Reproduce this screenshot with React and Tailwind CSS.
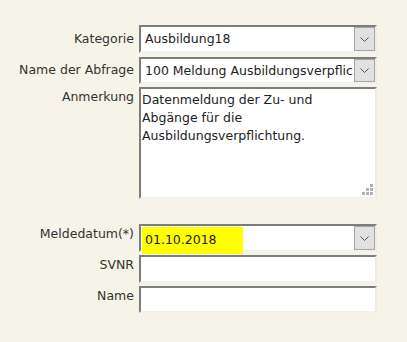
import React from 'react';

const font = { fontFamily: '"DejaVu Sans", Verdana, sans-serif' };

const Chevron = () => (
  <svg width="9" height="5" viewBox="0 0 9 5" className="block">
    <path d="M0.5 0.5 L4.5 4.5 L8.5 0.5" fill="none" stroke="#555" strokeWidth="1" />
  </svg>
);

const Box = ({ className = '', children }) => (
  <div
    className={`relative w-[238px] bg-white border-t-2 border-l-2 border-r-2 border-b-2 border-t-[#7d7d7d] border-l-[#7d7d7d] border-r-[#ececec] border-b-[#f1f1f1] ${className}`}
  >
    {children}
  </div>
);

const DropButton = () => (
  <div className="absolute right-0 top-0 bottom-0 w-[21px] bg-[#e1e1e1] border border-[#a5a5a5] flex items-center justify-center">
    <Chevron />
  </div>
);

const Row = ({ label, labelClass = 'items-center', labelPad = '', className = '', children }) => (
  <div className={`flex ${labelClass} ${className}`}>
    <div className={`w-[134px] text-right text-[12.5px] text-[#333] leading-none shrink-0 ${labelPad}`}>{label}</div>
    <div className="ml-[5px]">{children}</div>
  </div>
);

const App = () => {
  return (
    <div className="w-[407px] h-[342px] bg-[#f6f4e8] pt-[25px]" style={font}>
      <Row label="Kategorie">
        <Box className="h-[28px]">
          <div className="pl-[4px] text-[12.5px] leading-[24px] text-[#222]">Ausbildung18</div>
          <DropButton />
        </Box>
      </Row>
      <Row label="Name der Abfrage" className="mt-[4px]">
        <Box className="h-[27px] overflow-hidden">
          <div className="pl-[4px] text-[12.5px] leading-[23px] text-[#222] whitespace-nowrap">
            100 Meldung Ausbildungsverpflic
          </div>
          <DropButton />
        </Box>
      </Row>
      <Row label="Anmerkung" labelClass="items-start" labelPad="pt-[4px]" className="mt-[3px]">
        <Box className="h-[112px]">
          <div className="pl-[1px] pt-[2px] pr-[8px] text-[12.5px] leading-[18px] text-[#222]">
            Datenmeldung der Zu- und
            <br />
            Abgänge für die
            <br />
            Ausbildungsverpflichtung.
          </div>
          <svg width="11" height="11" viewBox="0 0 11 11" className="absolute right-[2px] bottom-[2px]">
            <g fill="#b3b3b3">
              <rect x="8" y="0" width="3" height="3" />
              <rect x="4" y="4" width="3" height="3" />
              <rect x="8" y="4" width="3" height="3" />
              <rect x="0" y="8" width="3" height="3" />
              <rect x="4" y="8" width="3" height="3" />
              <rect x="8" y="8" width="3" height="3" />
            </g>
          </svg>
        </Box>
      </Row>
      <Row label="Meldedatum(*)" className="mt-[25px]" labelClass="items-start" labelPad="pt-[4px]">
        <Box className="h-[28px]">
          <div className="ml-[1px] mt-[1px] w-[101px] h-[27px] bg-[#ffff00] pl-[3px] text-[12.5px] leading-[25px] text-[#222]">
            01.10.2018
          </div>
          <DropButton />
        </Box>
      </Row>
      <Row label="SVNR" className="mt-[3px]" labelClass="items-start" labelPad="pt-[4px]">
        <Box className="h-[28px]" />
      </Row>
      <Row label="Name" className="mt-[3px]" labelClass="items-start" labelPad="pt-[4px]">
        <Box className="h-[27px]" />
      </Row>
    </div>
  );
};

export default App;
